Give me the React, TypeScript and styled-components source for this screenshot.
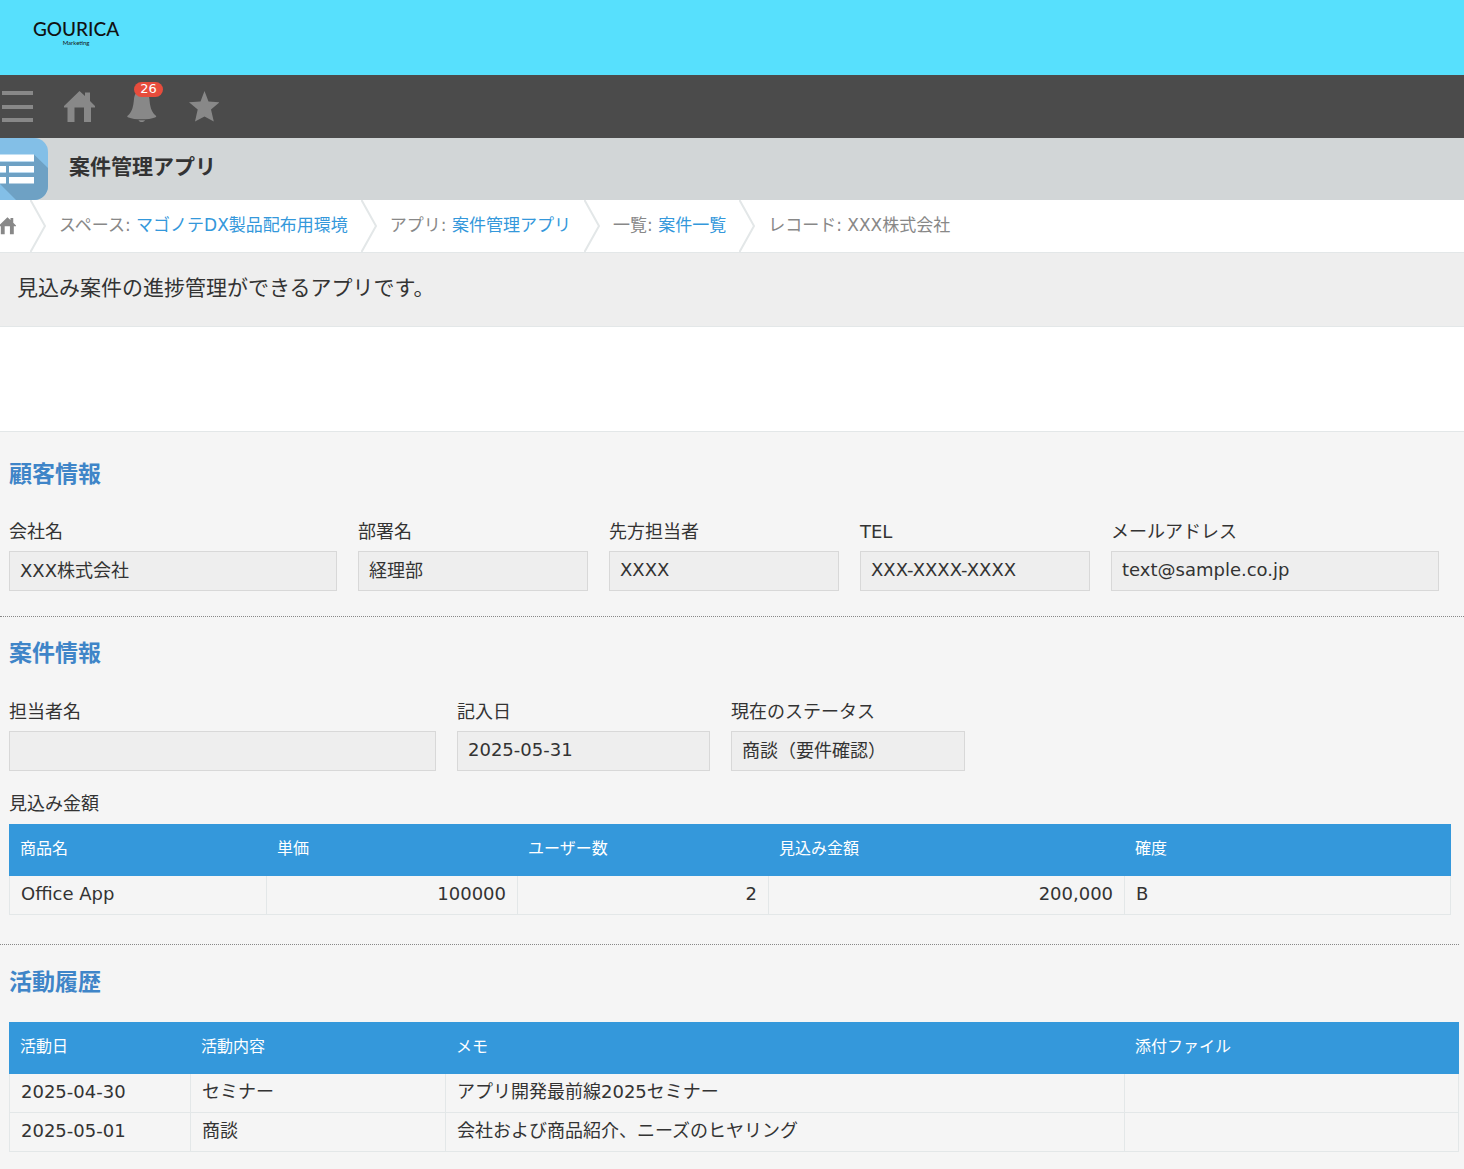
import React, { useId } from "react";
import styled, { createGlobalStyle } from "styled-components";

const GlobalStyle = createGlobalStyle`
  *, *::before, *::after { box-sizing: border-box; }
  body {
    margin: 0;
    background: #f5f5f5;
    color: #333;
    font-family: "DejaVu Sans", "Noto Sans CJK JP", sans-serif;
    font-size: 18px;
    line-height: 24px;
  }
`;

/* ---------- header ---------- */

const Brand = styled.header`
  height: 75px;
  padding: 18px 33px;
  background: #57e0fd;
`;

const Logo = styled.div`
  display: inline-flex;
  flex-direction: column;
  align-items: center;
  color: #111;
  font-family: Lato, sans-serif;
`;

const LogoName = styled.span`
  font-size: 19px;
  font-weight: 500;
  line-height: 20px;
`;

const LogoSub = styled.span`
  font-size: 6px;
  line-height: 8px;
`;

const NavBar = styled.nav`
  display: flex;
  align-items: center;
  gap: 31px;
  height: 63px;
  padding: 0 2px;
  background: #4b4b4b;
`;

const NavButton = styled.button`
  position: relative;
  display: flex;
  padding: 0;
  border: 0;
  background: none;
  color: #888;
  cursor: pointer;
`;

const Badge = styled.span`
  position: absolute;
  top: -9px;
  left: 8px;
  width: 29px;
  height: 15px;
  border-radius: 8px;
  background: #e74c3c;
  color: #fff;
  font-family: "DejaVu Sans", sans-serif;
  font-size: 13px;
  line-height: 14px;
  text-align: center;
`;

const AppBar = styled.div`
  display: flex;
  gap: 21px;
  height: 62px;
  background: #d2d6d7;
`;

const AppTitle = styled.h1`
  margin: 0;
  font-size: 21px;
  font-weight: 700;
  line-height: 58px;
`;

const Crumbs = styled.ol`
  display: flex;
  height: 53px;
  margin: 0;
  padding: 0;
  border-bottom: 1px solid #e3e7e8;
  background: #fff;
  list-style: none;
`;

const Crumb = styled.li`
  display: flex;
  align-items: flex-start;
  gap: 13px;
  padding-right: 13px;
  color: #888;
  font-size: 17px;
  line-height: 50px;
  white-space: nowrap;
`;

const Link = styled.a`
  color: #3498db;
  text-decoration: none;
`;

const HomeLink = styled.a`
  display: flex;
  align-self: center;
  width: 17px;
  color: #888;
`;

const Description = styled.p`
  margin: 0;
  padding: 19px 17px 22px;
  border-bottom: 1px solid #e3e7e8;
  background: #eee;
  font-size: 21px;
  line-height: 32px;
`;

const RecordToolbar = styled.div`
  height: 105px;
  border-bottom: 1px solid #e3e7e8;
  background: #fff;
`;

/* ---------- record ---------- */

const Section = styled.section<{ $top: number; $bottom: number }>`
  padding: ${(p) => p.$top}px 5px ${(p) => p.$bottom}px 9px;
`;

const Divider = styled.hr<{ $inset: number }>`
  height: 0;
  margin: 0 ${(p) => p.$inset}px 0 0;
  border: 0;
  border-top: 1px dotted #888;
`;

const SectionTitle = styled.h2<{ $gap: number }>`
  margin: 0 0 ${(p) => p.$gap}px;
  color: #3f85c8;
  font-size: 23px;
  font-weight: 700;
  line-height: 36px;
`;

const FieldRow = styled.div`
  display: flex;
  flex-wrap: wrap;
  gap: 20px 21px;
`;

const FieldBox = styled.div<{ $width: number }>`
  display: flex;
  flex-direction: column;
  gap: 7px;
  width: ${(p) => p.$width}px;
  max-width: 100%;
`;

const ValueInput = styled.input`
  width: 100%;
  height: 40px;
  padding: 0 10px 4px;
  border: 1px solid #d8d8d8;
  border-radius: 0;
  outline: none;
  background: #eee;
  color: #333;
  font: inherit;
`;

const TableBlock = styled.div`
  padding: 21px 8px 0 0;
`;

const TableLabel = styled.div`
  padding-bottom: 8px;
`;

const Table = styled.table`
  width: 100%;
  border-collapse: separate;
  border-spacing: 0;
  table-layout: fixed;
`;

const Col = styled.col<{ $share: number }>`
  width: ${(p) => p.$share}%;
`;

const HeadCell = styled.th`
  height: 52px;
  padding: 0 10px 3px;
  background: #3498db;
  color: #fff;
  font-size: 16px;
  font-weight: 400;
  text-align: left;

  &:first-child { padding-left: 11px; }
`;

const Cell = styled.td<{ $numeric?: boolean }>`
  height: 39px;
  padding: 0 11px 2px;
  border: 1px solid #e3e7e8;
  border-width: 0 1px 1px 0;
  text-align: ${(p) => (p.$numeric ? "right" : "left")};

  &:first-child { border-left-width: 1px; }
`;

/* ---------- icons ---------- */

const MenuIcon = () => (
  <svg width="31" height="31" viewBox="0 0 31 31" fill="currentColor" aria-hidden="true">
    <path d="M0 0h31v4H0zM0 14h31v4H0zM0 27h31v4H0z" />
  </svg>
);

const HOUSE = "M15.500 0 21 5V1.500h5V10L31 15v1.500h-4V31h-7V16.500h-9.500V31h-7V16.500H0V15z";

const HouseIcon = () => (
  <svg width="31" height="31" viewBox="0 0 31 31" fill="currentColor" aria-hidden="true">
    <path d={HOUSE} />
  </svg>
);

const BellIcon = () => (
  <svg width="31" height="31" viewBox="0 0 31 31" fill="currentColor" aria-hidden="true">
    <path d="M15.700 0C10.500 0 8.500 3 8 8 7.300 15 6.500 20 2.500 24c-1.600 1.200-1.800 1.800 0 2.400C8.500 29 23 29 29 26.400c1.800-.6 1.600-1.200 0-2.400C25 20 24 15 23.400 8 23 3 21 0 15.700 0z" />
    <path d="M12.500 29.200h6.500c-.6 2.400-5.900 2.400-6.500 0z" />
  </svg>
);

const StarIcon = () => (
  <svg width="31" height="31" viewBox="-1 0 31 31" fill="currentColor" aria-hidden="true">
    <path d="M15.500 0 19.500 10.500 30.500 11.300 22 18.500 24.800 30.500 15.500 25.500 6 30.500 8.700 18.500 0 11.300 11.500 10.500z" />
  </svg>
);

const AppIcon = () => (
  <svg width="48" height="62" viewBox="0 0 48 62" aria-hidden="true">
    <path fill="#83bfe7" d="M0 0h34a14 14 0 0 1 14 14v34a14 14 0 0 1-14 14H0z" />
    <path fill="#6ea1c4" d="M34 16.500 48 30v18a14 14 0 0 1-14 14H16L0 46V23h34z" />
    <path fill="#b9d9ef" d="M0 22.500h34V24H0zM0 33.500h6V35H0zM9 33.500h25V35H9z" />
    <path fill="#fff" d="M0 16.500h34v6.500H0zM0 28h6v6H0zM9 28h25v6H9zM0 39h6v6.500H0zM9 39h25v6.500H9z" />
  </svg>
);

const Chevron = () => (
  <svg width="16" height="52" viewBox="0 0 16 52" fill="none" aria-hidden="true">
    <path d="M.5 0 15 26 .5 52" stroke="#e3e7e8" strokeWidth="2" />
  </svg>
);

/* ---------- parts ---------- */

type FieldData = { label: string; value: string; width: number };

const Field = ({ label, value, width }: FieldData) => {
  const id = useId();
  return (
    <FieldBox $width={width}>
      <label htmlFor={id}>{label}</label>
      <ValueInput id={id} value={value} readOnly />
    </FieldBox>
  );
};

type Column = { title: string; share: number; numeric?: boolean };

const DataTable = ({ columns, rows, label }: { columns: Column[]; rows: string[][]; label: string }) => (
  <Table aria-label={label}>
    <colgroup>
      {columns.map((c) => (
        <Col key={c.title} $share={c.share} />
      ))}
    </colgroup>
    <thead>
      <tr>
        {columns.map((c) => (
          <HeadCell key={c.title} scope="col">{c.title}</HeadCell>
        ))}
      </tr>
    </thead>
    <tbody>
      {rows.map((row) => (
        <tr key={row[0]}>
          {row.map((value, i) => (
            <Cell key={columns[i].title} $numeric={columns[i].numeric}>{value}</Cell>
          ))}
        </tr>
      ))}
    </tbody>
  </Table>
);

const customer: FieldData[] = [
  { label: "会社名", value: "XXX株式会社", width: 328 },
  { label: "部署名", value: "経理部", width: 230 },
  { label: "先方担当者", value: "XXXX", width: 230 },
  { label: "TEL", value: "XXX-XXXX-XXXX", width: 230 },
  { label: "メールアドレス", value: "text@sample.co.jp", width: 328 },
];

const deal: FieldData[] = [
  { label: "担当者名", value: "", width: 427 },
  { label: "記入日", value: "2025-05-31", width: 253 },
  { label: "現在のステータス", value: "商談（要件確認）", width: 234 },
];

const amountColumns: Column[] = [
  { title: "商品名", share: 17.89 },
  { title: "単価", share: 17.41, numeric: true },
  { title: "ユーザー数", share: 17.41, numeric: true },
  { title: "見込み金額", share: 24.69, numeric: true },
  { title: "確度", share: 22.6 },
];

const historyColumns: Column[] = [
  { title: "活動日", share: 12.55 },
  { title: "活動内容", share: 17.59 },
  { title: "メモ", share: 46.83 },
  { title: "添付ファイル", share: 23.03 },
];

const crumbs = [
  { kind: "スペース", name: "マゴノテDX製品配布用環境" },
  { kind: "アプリ", name: "案件管理アプリ" },
  { kind: "一覧", name: "案件一覧" },
];

export default function App() {
  return (
    <>
      <GlobalStyle />
      <Brand>
        <Logo>
          <LogoName>GOURICA</LogoName>
          <LogoSub>Marketing</LogoSub>
        </Logo>
      </Brand>
      <NavBar>
        <NavButton aria-label="メニュー"><MenuIcon /></NavButton>
        <NavButton aria-label="ポータル"><HouseIcon /></NavButton>
        <NavButton aria-label="通知">
          <BellIcon />
          <Badge>26</Badge>
        </NavButton>
        <NavButton aria-label="ブックマーク"><StarIcon /></NavButton>
      </NavBar>
      <AppBar>
        <AppIcon />
        <AppTitle>案件管理アプリ</AppTitle>
      </AppBar>
      <Crumbs>
        <Crumb>
          <HomeLink href="#" aria-label="ホーム">
            <svg width="16" height="18" viewBox="2 0 29 32" fill="currentColor" aria-hidden="true">
              <path d={HOUSE} />
            </svg>
          </HomeLink>
          <Chevron />
        </Crumb>
        {crumbs.map((c) => (
          <Crumb key={c.kind}>
            <span>{c.kind}: <Link href="#">{c.name}</Link></span>
            <Chevron />
          </Crumb>
        ))}
        <Crumb>レコード: XXX株式会社</Crumb>
      </Crumbs>
      <Description>見込み案件の進捗管理ができるアプリです。</Description>
      <RecordToolbar />
      <main>
        <Section $top={24} $bottom={25}>
          <SectionTitle $gap={28}>顧客情報</SectionTitle>
          <FieldRow>
            {customer.map((f) => <Field key={f.label} {...f} />)}
          </FieldRow>
        </Section>
        <Divider $inset={0} />
        <Section $top={18} $bottom={29}>
          <SectionTitle $gap={29}>案件情報</SectionTitle>
          <FieldRow>
            {deal.map((f) => <Field key={f.label} {...f} />)}
          </FieldRow>
          <TableBlock>
            <TableLabel>見込み金額</TableLabel>
            <DataTable
              label="見込み金額"
              columns={amountColumns}
              rows={[["Office App", "100000", "2", "200,000", "B"]]}
            />
          </TableBlock>
        </Section>
        <Divider $inset={5} />
        <Section $top={19} $bottom={17}>
          <SectionTitle $gap={22}>活動履歴</SectionTitle>
          <DataTable
            label="活動履歴"
            columns={historyColumns}
            rows={[
              ["2025-04-30", "セミナー", "アプリ開発最前線2025セミナー", ""],
              ["2025-05-01", "商談", "会社および商品紹介、ニーズのヒヤリング", ""],
            ]}
          />
        </Section>
      </main>
    </>
  );
}
